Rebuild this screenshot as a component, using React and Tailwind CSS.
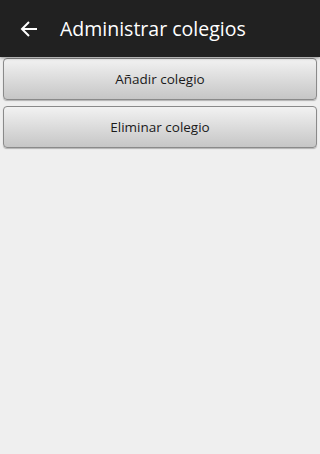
import React from 'react'

const font = { fontFamily: '"Open Sans", "Noto Sans", sans-serif' }

const BackArrow = () => (
  <svg width="18" height="18" viewBox="0 0 18 18" fill="none">
    <path d="M17 9H2.5M9 2L2 9l7 7" stroke="white" strokeWidth="2" />
  </svg>
)

const OldButton = ({ children }) => (
  <button
    className="w-full h-[42px] rounded-[4px] border border-[#8a8a8a] bg-gradient-to-b from-[#f2f2f2] to-[#c6c6c6] text-[13.5px] text-[#1a1a1a] shadow-[0_1px_1px_rgba(0,0,0,0.25)]"
    style={font}
  >
    {children}
  </button>
)

export default function App() {
  return (
    <div className="w-[320px] h-[454px] bg-[#efefef] flex flex-col" style={font}>
      <div className="h-[57px] bg-[#212121] flex items-center shrink-0 shadow-[0_1px_3px_rgba(0,0,0,0.4)] relative z-10">
        <div className="w-[56px] flex justify-center pl-[1px]">
          <BackArrow />
        </div>
        <span className="text-white text-[19.5px] ml-[4px]">Administrar colegios</span>
      </div>
      <div className="flex flex-col gap-[6px] px-[3px] pt-[1px]">
        <OldButton>Añadir colegio</OldButton>
        <OldButton>Eliminar colegio</OldButton>
      </div>
    </div>
  )
}
